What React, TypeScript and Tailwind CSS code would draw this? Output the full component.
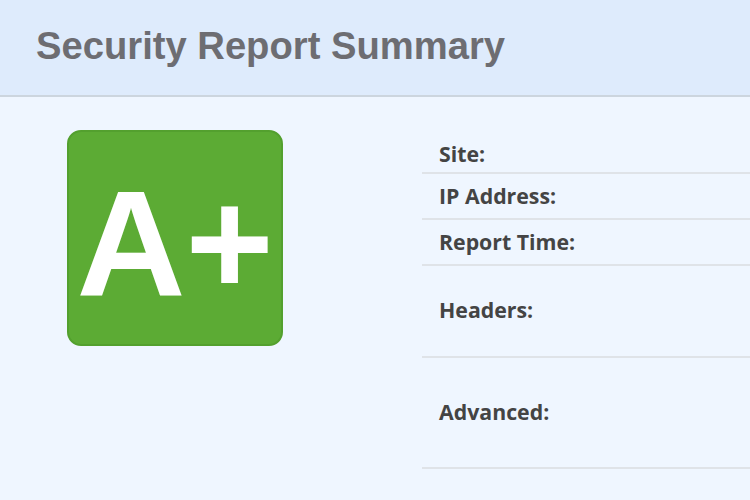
import React from 'react';

const rows: { label: string; cls: string }[] = [
  { label: 'Site:', cls: 'pt-[11px] pb-[4px]' },
  { label: 'IP Address:', cls: 'pt-[8px] pb-[8px]' },
  { label: 'Report Time:', cls: 'pt-[8px] pb-[8px]' },
  { label: 'Headers:', cls: 'pt-[30px] pb-[32px]' },
  { label: 'Advanced:', cls: 'pt-[40px] pb-[41px]' },
];

const App: React.FC = () => {
  return (
    <div className="w-[750px] h-[500px] overflow-hidden bg-[#eff6ff]">
      <header className="h-[97px] bg-[#deebfc] border-b-2 border-[#ccd5de] pl-[36px] pt-[27px]">
        <h1 className="text-[38.2px] leading-[38px] font-bold text-[#6d6d72] [font-family:'Liberation_Sans',Arial,sans-serif]">
          Security Report Summary
        </h1>
      </header>

      <main className="flex pt-[33px]">
        <div className="w-[422px] shrink-0 pl-[67px]">
          <div className="w-[216px] h-[216px] rounded-[14px] bg-[#5cab34] border-2 border-[#53a02e] flex items-center justify-center">
            <span className="text-[151px] leading-none font-bold text-white pt-[9px] [font-family:'Liberation_Sans',Arial,sans-serif]">
              A+
            </span>
          </div>
        </div>

        <div className="flex-1 -mt-[1px] [font-family:'Open_Sans',sans-serif]">
          {rows.map((row) => (
            <div key={row.label} className={`border-b-2 border-[#dfe3e8] pl-[17px] ${row.cls}`}>
              <div className="text-[21.3px] leading-[28px] font-bold text-[#444444]">{row.label}</div>
            </div>
          ))}
        </div>
      </main>
    </div>
  );
};

export default App;
